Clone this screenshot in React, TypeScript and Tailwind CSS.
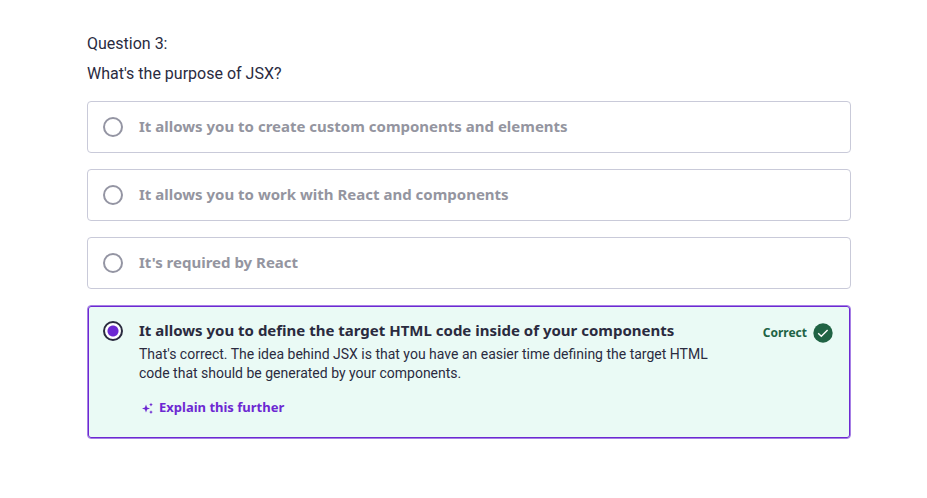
import { useState } from "react";

const answers = [
  "It allows you to create custom components and elements",
  "It allows you to work with React and components",
  "It's required by React",
  "It allows you to define the target HTML code inside of your components",
];

const correctIndex = 3;

function Sparkles() {
  return (
    <svg viewBox="0 0 12 12" className="size-3 shrink-0" fill="currentColor" aria-hidden="true">
      <path d="M5 2.5 6.1 5.4 9 6.5 6.1 7.6 5 10.5 3.9 7.6 1 6.5 3.9 5.4Z" />
      <path d="M10 .8 10.6 2.1 11.8 2.7 10.6 3.3 10 4.6 9.4 3.3 8.2 2.7 9.4 2.1Z" />
      <path d="M10 8.2 10.6 9.5 11.8 10.1 10.6 10.7 10 12 9.4 10.7 8.2 10.1 9.4 9.5Z" />
    </svg>
  );
}

function CheckBadge() {
  return (
    <svg viewBox="0 0 20 20" className="size-5 shrink-0" aria-hidden="true">
      <circle cx="10" cy="10" r="9.7" fill="#206344" />
      <path d="m5.2 10.2 3.1 3.1 6.3-6.3" fill="none" stroke="#fff" strokeWidth="1.4" />
    </svg>
  );
}

function Radio({ id, checked, onChange }: { id: string; checked: boolean; onChange: () => void }) {
  return (
    <input
      id={id}
      type="radio"
      name="answer"
      checked={checked}
      onChange={onChange}
      className="size-5 shrink-0 appearance-none rounded-full border-2 border-[#9495a3] bg-white checked:border-[#2a2b3f] checked:bg-[radial-gradient(circle,#6d28d2_5px,#fff_6px)]"
    />
  );
}

export default function App() {
  const [selected, setSelected] = useState(correctIndex);

  return (
    <main className="bg-white pt-8 pr-[76px] pb-14 pl-[87px] font-['Roboto',sans-serif] text-[#2a2b3f]">
      <form>
        <p className="text-base leading-6">Question 3:</p>
        <h1 id="prompt" className="mt-1.5 text-base leading-6">
          What's the purpose of JSX?
        </h1>
        <ul aria-labelledby="prompt" className="mt-[15px] flex flex-col gap-4">
          {answers.map((answer, index) => {
            const id = `answer-${index}`;
            const radio = (
              <Radio id={id} checked={selected === index} onChange={() => setSelected(index)} />
            );
            if (index !== correctIndex) {
              return (
                <li key={id} className="flex items-center gap-4 rounded border border-[#c9cad9] px-[15px] py-[15px]">
                  {radio}
                  <label
                    htmlFor={id}
                    className="pb-0.5 font-['Noto_Sans',sans-serif] text-[15px] leading-[18px] font-bold text-[#9495a0]"
                  >
                    {answer}
                  </label>
                </li>
              );
            }
            return (
              <li
                key={id}
                className="flex items-start gap-4 rounded border border-[#a67fe5] bg-[#eafaf5] px-[15px] pt-[15px] pb-3.5 inset-ring-1 inset-ring-[#6d28d2]"
              >
                {radio}
                <div className="min-w-0 flex-1">
                  <label
                    htmlFor={id}
                    className="block pb-0.5 font-['Noto_Sans',sans-serif] text-[15px] leading-[18px] font-bold"
                  >
                    {answer}
                  </label>
                  <p className="mt-1 max-w-[580px] text-sm leading-[19px]">
                    That's correct. The idea behind JSX is that you have an easier time defining the target HTML
                    code that should be generated by your components.
                  </p>
                  <button
                    type="button"
                    className="mt-[9px] flex h-8 items-center gap-1.5 px-0.5 font-['Noto_Sans',sans-serif] text-[13px] font-bold text-[#6d28d2]"
                  >
                    <Sparkles />
                    Explain this further
                  </button>
                </div>
                <div className="mt-0.5 flex items-center gap-1.5 pr-0.5 font-['Noto_Sans',sans-serif] text-xs font-bold text-[#206344]">
                  Correct
                  <CheckBadge />
                </div>
              </li>
            );
          })}
        </ul>
      </form>
    </main>
  );
}
